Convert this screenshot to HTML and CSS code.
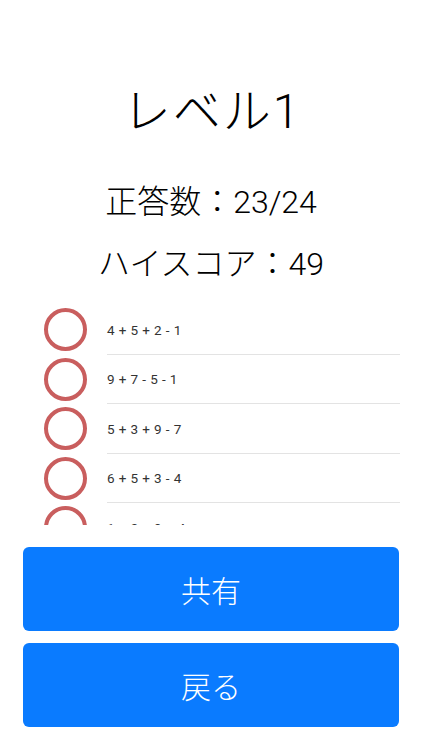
FILE: index.html
```html
<html>
  <head>
    <meta charset="utf-8">
    <link rel="stylesheet" href="styles.css">
    <title>結果</title>
  </head>
  <body>
    <div class="screen">
      <header class="result">
        <h1 class="level">レベル1</h1>
        <p class="stat">正答数：23/24</p>
        <p class="stat score">ハイスコア：49</p>
      </header>

      <ul class="answers">
        <li class="row"><span class="mark"></span><span class="formula">4 + 5 + 2 - 1</span></li>
        <li class="row"><span class="mark"></span><span class="formula">9 + 7 - 5 - 1</span></li>
        <li class="row"><span class="mark"></span><span class="formula">5 + 3 + 9 - 7</span></li>
        <li class="row"><span class="mark"></span><span class="formula">6 + 5 + 3 - 4</span></li>
        <li class="row"><span class="mark"></span><span class="formula">1 + 2 + 9 + 4</span></li>
      </ul>

      <div class="actions">
        <button class="btn">共有</button>
        <button class="btn">戻る</button>
      </div>
    </div>
  </body>
</html>
```

FILE: styles.css
```css
body {
  margin: 0;
  background: #fff;
  font-family: Roboto, "Noto Sans CJK JP", sans-serif;
  color: #000;
}

.screen {
  width: 422px;
  height: 750px;
  display: flex;
  flex-direction: column;
}

.result {
  padding-top: 88px;
  text-align: center;
}

.level {
  margin: 0;
  padding-left: 2px;
  font-size: 48px;
  font-weight: 300;
  line-height: 48px;
  letter-spacing: 2px;
}

.stat {
  margin: 50px 0 0;
  font-size: 32px;
  font-weight: 300;
  line-height: 32px;
}

.stat.score {
  margin-top: 30px;
}

.answers {
  list-style: none;
  margin: 25px 0 0;
  padding: 0;
  height: 220px;
  overflow: hidden;
}

.row {
  height: 49.5px;
  display: flex;
  align-items: center;
  position: relative;
}

.row::after {
  content: "";
  position: absolute;
  left: 107px;
  right: 22px;
  bottom: 0;
  height: 1px;
  background: #e3e3e3;
}

.mark {
  box-sizing: border-box;
  width: 43px;
  height: 43px;
  margin-left: 44px;
  border: 4px solid #c95e5e;
  border-radius: 50%;
}

.formula {
  margin-left: 20px;
  font-size: 13.5px;
  color: #333;
  letter-spacing: 0.4px;
}

.actions {
  margin: 22px 23px 0;
  display: flex;
  flex-direction: column;
  gap: 12px;
}

.btn {
  height: 84px;
  border: none;
  border-radius: 6px;
  background: #0a7bff;
  color: #fff;
  font-family: "Noto Sans CJK JP", sans-serif;
  font-size: 30px;
  font-weight: 300;
}
```
